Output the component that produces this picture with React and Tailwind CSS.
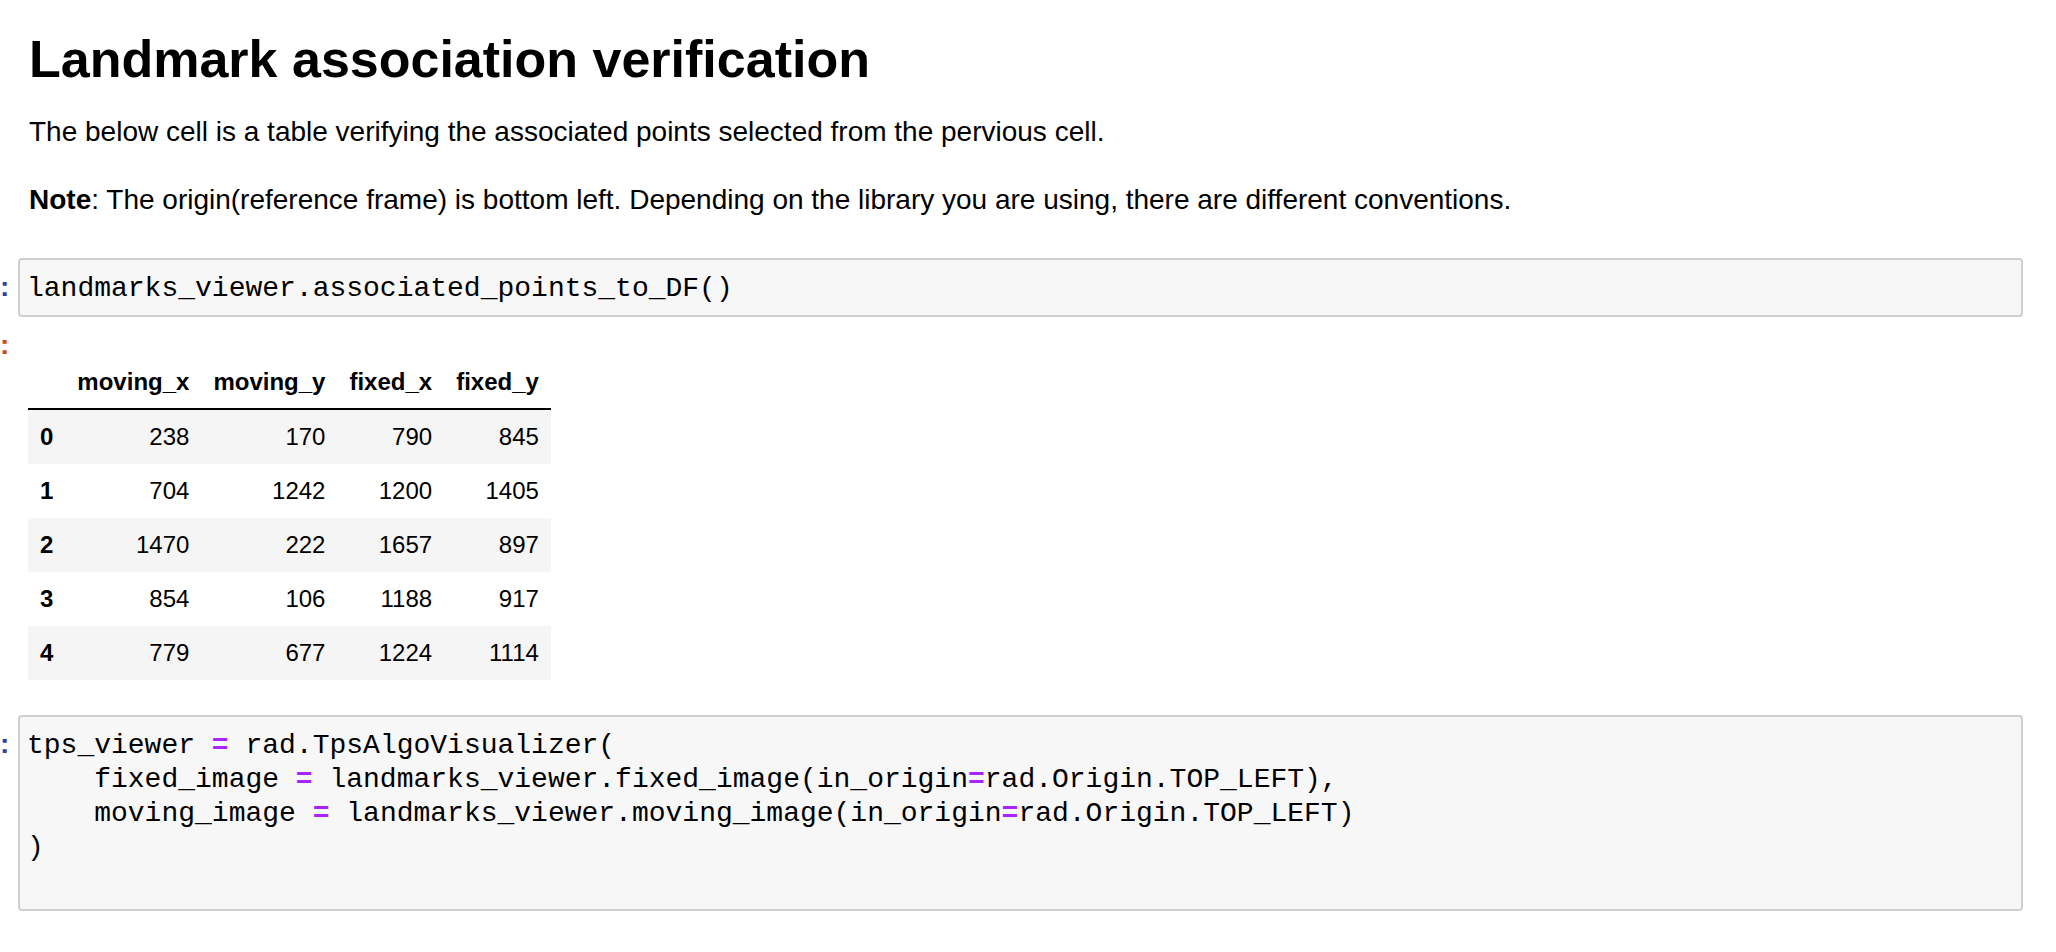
import React from "react";

const rows = [
  [0, 238, 170, 790, 845],
  [1, 704, 1242, 1200, 1405],
  [2, 1470, 222, 1657, 897],
  [3, 854, 106, 1188, 917],
  [4, 779, 677, 1224, 1114],
];

const columns = ["moving_x", "moving_y", "fixed_x", "fixed_y"];

function Prompt({ color }) {
  return (
    <div className="w-[18px] shrink-0">
      <span className={`font-['Liberation_Sans',Arial,sans-serif] font-bold text-[28px] leading-[34px] ${color}`}>:</span>
    </div>
  );
}

function Op() {
  return <span className="text-[#aa22ff] font-bold">=</span>;
}

function CodeBox({ children, className }) {
  return (
    <div
      className={`flex-1 border-2 border-[#cfcfcf] bg-[#f7f7f7] rounded-[4px] pl-[7px] pt-[12px] font-['Liberation_Mono',monospace] text-[28px] leading-[34px] whitespace-pre text-black ${className}`}
    >
      {children}
    </div>
  );
}

export default function App() {
  return (
    <div className="min-h-screen bg-white text-black font-['Liberation_Sans',Arial,sans-serif] pb-[41px]">
      <div className="pl-[29px] pr-[33px] pt-[30px]">
        <h1 className="text-[52px] font-bold leading-[58px]">Landmark association verification</h1>
        <p className="mt-[24px] text-[28px] leading-[40px]">
          The below cell is a table verifying the associated points selected from the pervious cell.
        </p>
        <p className="mt-[28px] text-[28px] leading-[40px]">
          <strong className="font-bold">Note</strong>: The origin(reference frame) is bottom left. Depending on the
          library you are using, there are different conventions.
        </p>
      </div>

      <div className="flex mt-[38px] pr-[33px]">
        <div className="pt-[12px]">
          <Prompt color="text-[#303f9f]" />
        </div>
        <CodeBox className="pb-[9px]">
          <div>landmarks_viewer.associated_points_to_DF()</div>
        </CodeBox>
      </div>

      <div className="flex mt-[13px]">
        <div className="-mt-[2px]">
          <Prompt color="text-[#d84315]" />
        </div>
        <div className="pl-[10px] pt-[25px]">
          <table className="border-collapse text-[24px] leading-[30px] text-black">
            <thead>
              <tr className="border-b-2 border-black">
                <th className="px-[12px] pt-[12px] pb-[11px]"></th>
                {columns.map((c) => (
                  <th key={c} className="px-[12px] pt-[12px] pb-[11px] text-right font-bold">
                    {c}
                  </th>
                ))}
              </tr>
            </thead>
            <tbody>
              {rows.map((r, i) => (
                <tr key={r[0]} className={i % 2 === 0 ? "bg-[#f5f5f5]" : "bg-white"}>
                  <th className="px-[12px] py-[12px] text-left font-bold">{r[0]}</th>
                  {r.slice(1).map((v, j) => (
                    <td key={j} className="px-[12px] py-[12px] text-right">
                      {v}
                    </td>
                  ))}
                </tr>
              ))}
            </tbody>
          </table>
        </div>
      </div>

      <div className="flex mt-[35px] pr-[33px]">
        <div className="pt-[12px]">
          <Prompt color="text-[#303f9f]" />
        </div>
        <CodeBox className="pb-[10px]">
          <div>
            tps_viewer <Op /> rad.TpsAlgoVisualizer(
          </div>
          <div>
            {"    fixed_image "}
            <Op />
            {" landmarks_viewer.fixed_image(in_origin"}
            <Op />
            {"rad.Origin.TOP_LEFT),"}
          </div>
          <div>
            {"    moving_image "}
            <Op />
            {" landmarks_viewer.moving_image(in_origin"}
            <Op />
            {"rad.Origin.TOP_LEFT)"}
          </div>
          <div>)</div>
          <div>{" "}</div>
        </CodeBox>
      </div>
    </div>
  );
}
